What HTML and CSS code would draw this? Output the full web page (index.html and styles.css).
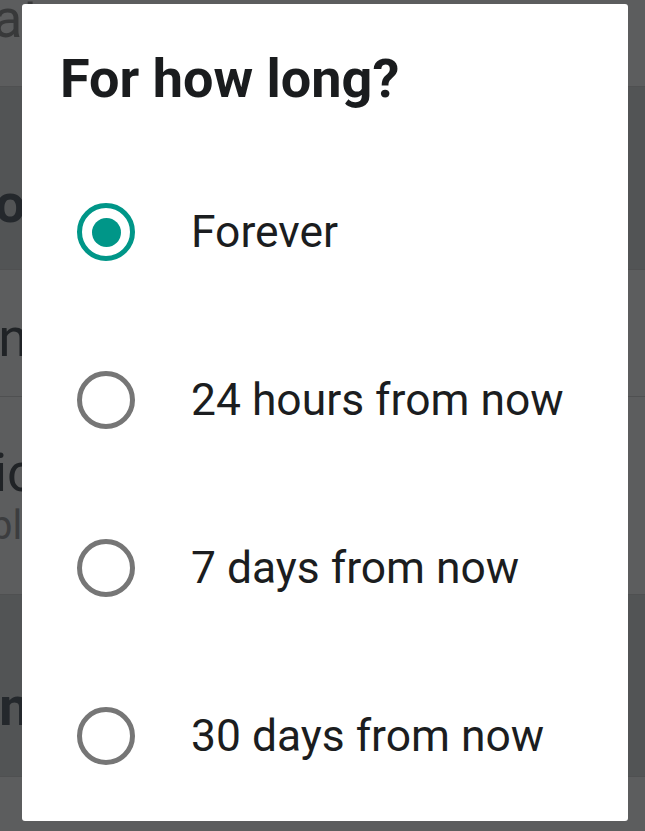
FILE: index.html
```html
<!DOCTYPE html>
<html lang="en">

<head>
  <meta charset="UTF-8">
  <meta name="viewport" content="width=device-width, initial-scale=1.0">
  <title>For how long?</title>
  <link rel="stylesheet" href="styles.css">
</head>

<body>
  <!-- settings page behind the dialog, dimmed by the scrim -->
  <ul class="settings">
    <li class="row row-top"><span class="label muted">Chat</span></li>
    <li class="row row-head"><span class="label head">Do not disturb</span></li>
    <li class="row row-plain"><span class="label">Once</span></li>
    <li class="row row-two">
      <span class="label">Voice</span>
      <span class="sub">blocked</span>
    </li>
    <li class="row row-head2"><span class="label head">Snooze</span></li>
    <li class="row row-bottom"></li>
  </ul>

  <div class="dialog">
    <h1 class="title">For how long?</h1>
    <ul class="options">
      <li class="option checked">
        <span class="radio"><span class="dot"></span></span>
        <span class="option-text">Forever</span>
      </li>
      <li class="option">
        <span class="radio"></span>
        <span class="option-text">24 hours from now</span>
      </li>
      <li class="option">
        <span class="radio"></span>
        <span class="option-text">7 days from now</span>
      </li>
      <li class="option">
        <span class="radio"></span>
        <span class="option-text">30 days from now</span>
      </li>
    </ul>
  </div>
</body>

</html>
```

FILE: styles.css
```css
body,
ul,
li,
h1,
div {
  margin: 0;
  padding: 0;
  box-sizing: border-box;
}
ul {
  list-style: none;
}
body {
  position: relative;
  width: 645px;
  height: 831px;
  overflow: hidden;
  background-color: #5c5d5e;
  font-family: Roboto, "Noto Sans", sans-serif;
}

/* background page */
.settings .row {
  display: flex;
  flex-direction: column;
  justify-content: center;
  border-bottom: 1px solid #4f5051;
  overflow: hidden;
  white-space: nowrap;
}
.label {
  font-size: 54px;
  line-height: 1;
  color: #202326;
}
.muted {
  color: #38393a;
}
.head {
  font-weight: 700;
  color: #24282c;
}
.sub {
  font-size: 40px;
  line-height: 1;
  color: #3c3d3f;
  margin-top: 6px;
}
.row-top {
  height: 87px;
  justify-content: flex-end;
  padding-bottom: 48px;
}
.row-top .label {
  margin-left: -72px;
}
.row-head {
  height: 183px;
  background-color: #525455;
}
.row-head .label {
  margin-left: -40px;
  margin-top: 52px;
}
.row-plain {
  height: 127px;
}
.row-plain .label {
  margin-left: -39px;
  margin-top: 10px;
}
.row-two {
  height: 198px;
  align-items: flex-start;
}
.row-two .label {
  margin-left: -70px;
}
.row-two .sub {
  margin-left: -10px;
}
.row-head2 {
  height: 182px;
  background-color: #525455;
}
.row-head2 .label {
  margin-left: -34px;
  margin-top: 42px;
}
.row-bottom {
  height: 60px;
  border-bottom: 0;
}

/* dialog */
.dialog {
  position: absolute;
  left: 22px;
  top: 4px;
  width: 606px;
  height: 817px;
  padding-top: 48px;
  background-color: #fff;
  border-radius: 3px;
}
.title {
  padding-left: 38px;
  font-size: 54px;
  line-height: 54px;
  font-weight: 700;
  color: #1a1c1e;
}
.options {
  margin-top: 42px;
}
.option {
  display: flex;
  align-items: center;
  height: 168px;
  padding-left: 55px;
}
.radio {
  display: flex;
  align-items: center;
  justify-content: center;
  width: 58px;
  height: 58px;
  border: 5px solid #767676;
  border-radius: 50%;
  box-sizing: border-box;
}
.checked .radio {
  border-color: #009688;
}
.dot {
  width: 29px;
  height: 29px;
  border-radius: 50%;
  background-color: #009688;
}
.option-text {
  margin-left: 56px;
  font-size: 44.4px;
  color: #1b1d20;
}
```
